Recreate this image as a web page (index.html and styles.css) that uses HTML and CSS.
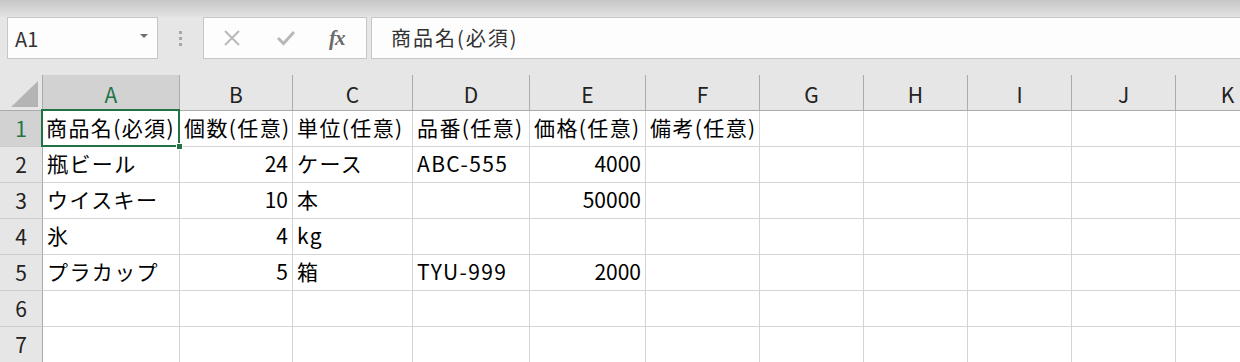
FILE: index.html
```html
<!DOCTYPE html>
<html lang="ja">
<head>
    <meta charset="UTF-8">
    <title>Book1 - Excel</title>
    <link rel="stylesheet" href="styles.css">
</head>
<body>
    <div class="ribbon-fade"></div>

    <div class="formula-bar">
        <div class="name-box">
            <span>A1</span>
            <span class="caret"></span>
        </div>
        <div class="grip"><i></i><i></i><i></i></div>
        <div class="fx-buttons">
            <svg class="btn-icon" width="18" height="18" viewBox="0 0 18 18">
                <path d="M2 2 L16 16 M16 2 L2 16" stroke="#b9b9b9" stroke-width="2" fill="none"/>
            </svg>
            <svg class="btn-icon" width="20" height="18" viewBox="0 0 20 18">
                <path d="M2 9 L7.5 14.5 L18 3" stroke="#b9b9b9" stroke-width="3" fill="none"/>
            </svg>
            <span class="fx">fx</span>
        </div>
        <div class="formula-input">商品名(必須)</div>
    </div>

    <div class="sheet">
        <div class="corner"><span class="select-all"></span></div>
        <div class="col-head selected">A</div>
        <div class="col-head">B</div>
        <div class="col-head">C</div>
        <div class="col-head">D</div>
        <div class="col-head">E</div>
        <div class="col-head">F</div>
        <div class="col-head">G</div>
        <div class="col-head">H</div>
        <div class="col-head">I</div>
        <div class="col-head">J</div>
        <div class="col-head">K</div>

        <!-- 1 -->
        <div class="row-head selected">1</div>
        <div class="cell active">商品名(必須)<span class="fill-handle"></span></div>
        <div class="cell">個数(任意)</div>
        <div class="cell">単位(任意)</div>
        <div class="cell">品番(任意)</div>
        <div class="cell">価格(任意)</div>
        <div class="cell">備考(任意)</div>
        <div class="cell"></div><div class="cell"></div><div class="cell"></div><div class="cell"></div><div class="cell"></div>

        <!-- 2 -->
        <div class="row-head">2</div>
        <div class="cell">瓶ビール</div>
        <div class="cell num">24</div>
        <div class="cell">ケース</div>
        <div class="cell">ABC-555</div>
        <div class="cell num">4000</div>
        <div class="cell"></div>
        <div class="cell"></div><div class="cell"></div><div class="cell"></div><div class="cell"></div><div class="cell"></div>

        <!-- 3 -->
        <div class="row-head">3</div>
        <div class="cell">ウイスキー</div>
        <div class="cell num">10</div>
        <div class="cell">本</div>
        <div class="cell"></div>
        <div class="cell num">50000</div>
        <div class="cell"></div>
        <div class="cell"></div><div class="cell"></div><div class="cell"></div><div class="cell"></div><div class="cell"></div>

        <!-- 4 -->
        <div class="row-head">4</div>
        <div class="cell">氷</div>
        <div class="cell num">4</div>
        <div class="cell">kg</div>
        <div class="cell"></div>
        <div class="cell"></div>
        <div class="cell"></div>
        <div class="cell"></div><div class="cell"></div><div class="cell"></div><div class="cell"></div><div class="cell"></div>

        <!-- 5 -->
        <div class="row-head">5</div>
        <div class="cell">プラカップ</div>
        <div class="cell num">5</div>
        <div class="cell">箱</div>
        <div class="cell">TYU-999</div>
        <div class="cell num">2000</div>
        <div class="cell"></div>
        <div class="cell"></div><div class="cell"></div><div class="cell"></div><div class="cell"></div><div class="cell"></div>

        <!-- 6 -->
        <div class="row-head">6</div>
        <div class="cell"></div><div class="cell"></div><div class="cell"></div><div class="cell"></div><div class="cell"></div>
        <div class="cell"></div><div class="cell"></div><div class="cell"></div><div class="cell"></div><div class="cell"></div><div class="cell"></div>

        <!-- 7 -->
        <div class="row-head">7</div>
        <div class="cell"></div><div class="cell"></div><div class="cell"></div><div class="cell"></div><div class="cell"></div>
        <div class="cell"></div><div class="cell"></div><div class="cell"></div><div class="cell"></div><div class="cell"></div><div class="cell"></div>
    </div>
</body>
</html>
```

FILE: styles.css
```css
html, body {
    margin: 0;
    padding: 0;
}
body {
    width: 1240px;
    height: 362px;
    overflow: hidden;
    background-color: #e6e6e6;
    font-family: "Noto Sans CJK JP", "Noto Sans", sans-serif;
    color: #000;
}
.ribbon-fade {
    height: 17px;
    background: linear-gradient(#c6c6c6, #e3e3e3);
}
.formula-bar {
    display: flex;
    align-items: stretch;
    height: 42px;
    padding: 0 0 16px 7px;
}
.name-box {
    width: 151px;
    box-sizing: border-box;
    display: flex;
    align-items: center;
    justify-content: space-between;
    padding: 0 9px 0 7px;
    background-color: #fdfdfd;
    border: 1px solid #c6c6c6;
    font-size: 20px;
    color: #333;
}
.name-box span:first-child {
    margin-top: 1px;
}
.caret {
    width: 0;
    height: 0;
    border-left: 4px solid transparent;
    border-right: 4px solid transparent;
    border-top: 4px solid #6f6f6f;
    margin-top: -4px;
}
.grip {
    width: 46px;
    display: flex;
    flex-direction: column;
    align-items: center;
    justify-content: center;
    gap: 3px;
    margin-left: -1px;
}
.grip i {
    display: block;
    width: 3px;
    height: 3px;
    background-color: #a8a8a8;
}
.fx-buttons {
    width: 164px;
    box-sizing: border-box;
    display: flex;
    align-items: center;
    background-color: #fdfdfd;
    border: 1px solid #c6c6c6;
    padding-left: 19px;
}
.fx-buttons svg:first-child {
    margin-right: 35px;
}
.fx-buttons svg:nth-child(2) {
    margin-right: 33px;
}
.fx {
    font-family: "Liberation Serif", serif;
    font-style: italic;
    font-weight: bold;
    font-size: 21px;
    color: #6a6a6a;
    letter-spacing: -1px;
}
.formula-input {
    flex: 1;
    margin-left: 4px;
    background-color: #fdfdfd;
    border: 1px solid #c6c6c6;
    border-right: none;
    display: flex;
    align-items: center;
    padding: 0 0 2px 19px;
    font-size: 20px;
    letter-spacing: 2px;
    color: #333;
}

.sheet {
    display: grid;
    grid-template-columns: 43px 137px 113px 120px 117px 116px 114px 104px 104px 104px 104px 104px;
    grid-template-rows: 36px repeat(7, 36px);
    font-size: 21px;
}
.corner, .col-head, .row-head, .cell {
    box-sizing: border-box;
    display: flex;
    align-items: center;
    white-space: nowrap;
}
.corner {
    background-color: #e6e6e6;
    border-right: 1px solid #ababab;
    border-bottom: 1px solid #ababab;
    padding: 5px 3px 3px 11px;
}
.select-all {
    width: 0;
    height: 0;
    border-left: 27px solid transparent;
    border-bottom: 26px solid #b4b4b4;
    margin-top: auto;
}
.col-head {
    justify-content: center;
    background-color: #e6e6e6;
    border-right: 1px solid #ababab;
    border-bottom: 1px solid #ababab;
    color: #222;
    padding-top: 2px;
}
.col-head.selected {
    background-color: #d2d2d2;
    color: #217346;
}
.row-head {
    justify-content: center;
    background-color: #e6e6e6;
    border-right: 1px solid #ababab;
    border-bottom: 1px solid #cdcdcd;
    color: #222;
    padding-bottom: 2px;
}
.row-head.selected {
    background-color: #d2d2d2;
    color: #217346;
}
.cell {
    background-color: #fff;
    border-right: 1px solid #d4d4d4;
    border-bottom: 1px solid #d4d4d4;
    padding: 0 3px 3px 4px;
    letter-spacing: 1.4px;
    overflow: visible;
}
.cell.num {
    justify-content: flex-end;
    padding-right: 4px;
    letter-spacing: 0;
}
.cell.active {
    position: relative;
    padding-left: 3px;
}
.cell.active::after {
    content: "";
    position: absolute;
    left: -2px;
    top: -2px;
    right: -1px;
    bottom: -1px;
    border: 2px solid #217346;
    pointer-events: none;
}
.fill-handle {
    position: absolute;
    right: -4px;
    bottom: -4px;
    width: 5px;
    height: 5px;
    background-color: #217346;
    border: 1px solid #fff;
    z-index: 1;
}
```
